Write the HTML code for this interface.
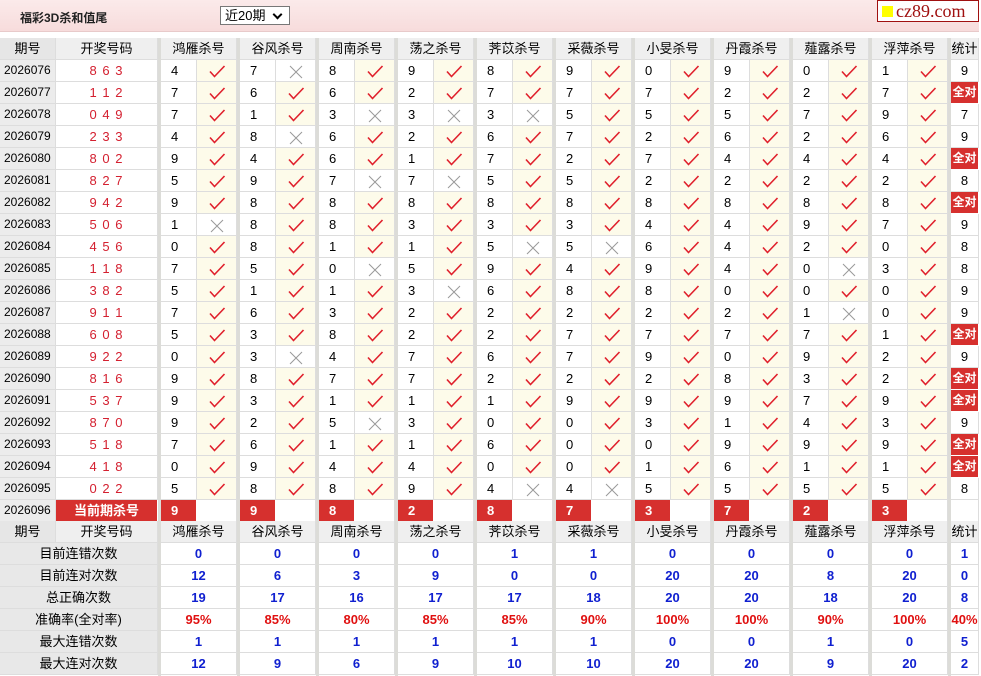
<!DOCTYPE html>
<html><head><meta charset="utf-8">
<style>
body{margin:0;width:981px;height:676px;overflow:hidden;background:#fff;font-family:"Liberation Sans","Noto Sans CJK SC",sans-serif;font-size:13px;position:relative}
.top{position:absolute;left:0;top:0;width:979px;height:31px;background:linear-gradient(#fbeaea,#f7dcdc);border-bottom:1px solid #e8caca}
.title{position:absolute;left:20px;top:9px;font-weight:bold;font-size:12px;color:#222}
.sel{position:absolute;left:220px;top:6px;width:70px;height:19px;border:1px solid #777;background:#fff;font-size:13px;line-height:18px;box-sizing:border-box;padding-left:4px}
.sel:after{content:"";position:absolute;right:8px;top:4px;width:5px;height:5px;border-right:2px solid #000;border-bottom:2px solid #000;transform:rotate(45deg)}
.logo{position:absolute;left:877px;top:0;width:100px;height:20px;border:1px solid #a01010;background:#fff;font-family:"Liberation Serif",serif;font-size:18px;color:#a01010;line-height:20px}
.logo i{display:inline-block;width:11px;height:11px;background:#ff0;margin:0 3px 0 4px}
.c{position:absolute;box-sizing:border-box;border-right:1px solid #ddd;border-bottom:1px solid #ddd;height:22px;line-height:21px;text-align:center;overflow:hidden;white-space:nowrap}
.sep{position:absolute;background:#dcdcd8;width:3px}
</style></head><body>
<div class="top"><div class="title">福彩3D杀和值尾</div><div class="sel">近20期</div><div class="logo"><i></i>cz89.com</div></div>
<div id="t"></div>
<script>
var names=["鸿雁杀号","谷风杀号","周南杀号","荡之杀号","荠苡杀号","采薇杀号","小旻杀号","丹霞杀号","薤露杀号","浮萍杀号"];
var rows=[
["2026076","863","4y7n8y9y8y9y0y9y0y1y","9"],
["2026077","112","7y6y6y2y7y7y7y2y2y7y","全对"],
["2026078","049","7y1y3n3n3n5y5y5y7y9y","7"],
["2026079","233","4y8n6y2y6y7y2y6y2y6y","9"],
["2026080","802","9y4y6y1y7y2y7y4y4y4y","全对"],
["2026081","827","5y9y7n7n5y5y2y2y2y2y","8"],
["2026082","942","9y8y8y8y8y8y8y8y8y8y","全对"],
["2026083","506","1n8y8y3y3y3y4y4y9y7y","9"],
["2026084","456","0y8y1y1y5n5n6y4y2y0y","8"],
["2026085","118","7y5y0n5y9y4y9y4y0n3y","8"],
["2026086","382","5y1y1y3n6y8y8y0y0y0y","9"],
["2026087","911","7y6y3y2y2y2y2y2y1n0y","9"],
["2026088","608","5y3y8y2y2y7y7y7y7y1y","全对"],
["2026089","922","0y3n4y7y6y7y9y0y9y2y","9"],
["2026090","816","9y8y7y7y2y2y2y8y3y2y","全对"],
["2026091","537","9y3y1y1y1y9y9y9y7y9y","全对"],
["2026092","870","9y2y5n3y0y0y3y1y4y3y","9"],
["2026093","518","7y6y1y1y6y0y0y9y9y9y","全对"],
["2026094","418","0y9y4y4y0y0y1y6y1y1y","全对"],
["2026095","022","5y8y8y9y4n4n5y5y5y5y","8"]];
var cur=["9","9","8","2","8","7","3","7","2","3"];
var stats=[["目前连错次数","0 0 0 0 1 1 0 0 0 0 1"],["目前连对次数","12 6 3 9 0 0 20 20 8 20 0"],["总正确次数","19 17 16 17 17 18 20 20 18 20 8"],["准确率(全对率)","95% 85% 80% 85% 85% 90% 100% 100% 90% 100% 40%"],["最大连错次数","1 1 1 1 1 1 0 0 1 0 5"],["最大连对次数","12 9 6 9 10 10 20 20 9 20 2"]];
var ok='<svg width="18" height="15" viewBox="0 0 18 15" style="vertical-align:middle"><path d="M2 7.5 L6.5 12.5 L16.5 2" fill="none" stroke="#e0202c" stroke-width="1.6"/></svg>';
var no='<svg width="16" height="16" viewBox="0 0 16 16" style="vertical-align:middle"><path d="M2 2L14 14M14 2L2 14" fill="none" stroke="#999" stroke-width="1"/></svg>';
var h='';
function cell(x,y,w,txt,st){h+='<div class="c" style="left:'+x+'px;top:'+y+'px;width:'+w+'px;'+(st||'')+'">'+txt+'</div>';}
function gx(g){return 161+79*g;}
function header(y){
 cell(0,y,56,'期号','background:#e6e6e6');
 cell(56,y,102,'开奖号码','background:#efefef');
 for(var g=0;g<10;g++)cell(gx(g),y,76,names[g],'background:#efefef');
 cell(951,y,28,'统计','background:#efefef');
}
header(38);
for(var i=0;i<20;i++){
 var y=60+22*i,r=rows[i];
 cell(0,y,56,r[0],'background:#ececec;text-align:left;padding-left:4px;font-size:12px');
 cell(56,y,102,r[1].split('').join(' '),'color:#d42030;letter-spacing:1px');
 for(var g=0;g<10;g++){
  var d=r[2][g*2],s=r[2][g*2+1];
  cell(gx(g),y,36,d,'text-align:left;padding-left:10px');
  cell(gx(g)+36,y,40,s=='y'?ok:no,s=='y'?'background:#fdfbea':'');
 }
 if(r[3]=='全对')cell(951,y,28,'全对','background:#d6302e;color:#fff;font-weight:bold;border-color:#fff;font-size:12px');
 else cell(951,y,28,r[3]);
}
var y=500;
cell(0,y,56,'2026096','background:#ececec;text-align:left;padding-left:4px;font-size:12px');
cell(56,y,102,'当前期杀号','background:#d6302e;color:#fff;font-weight:bold;border-color:#fff;font-size:13px');
for(var g=0;g<10;g++){cell(gx(g),y,36,cur[g],'background:#d6302e;color:#fff;font-weight:bold;text-align:left;padding-left:10px;border-color:#fff');cell(gx(g)+36,y,40,'');}
cell(951,y,28,'');
header(521);
for(var k=0;k<6;k++){
 var y=543+22*k,v=stats[k][1].split(' ');
 cell(0,y,158,stats[k][0],'background:#e8e8e8');
 var col=k==3?'#e01010':'#1020d0';
 for(var g=0;g<10;g++)cell(gx(g),y,76,v[g],'color:'+col+';font-weight:bold;font-size:13px');
 cell(951,y,28,v[10],'color:'+col+';font-weight:bold;font-size:13px');
}
for(var g=0;g<=10;g++)h+='<div class="sep" style="left:'+(158+79*g)+'px;top:38px;height:638px"></div>';
document.getElementById('t').innerHTML=h;
</script>
</body></html>
